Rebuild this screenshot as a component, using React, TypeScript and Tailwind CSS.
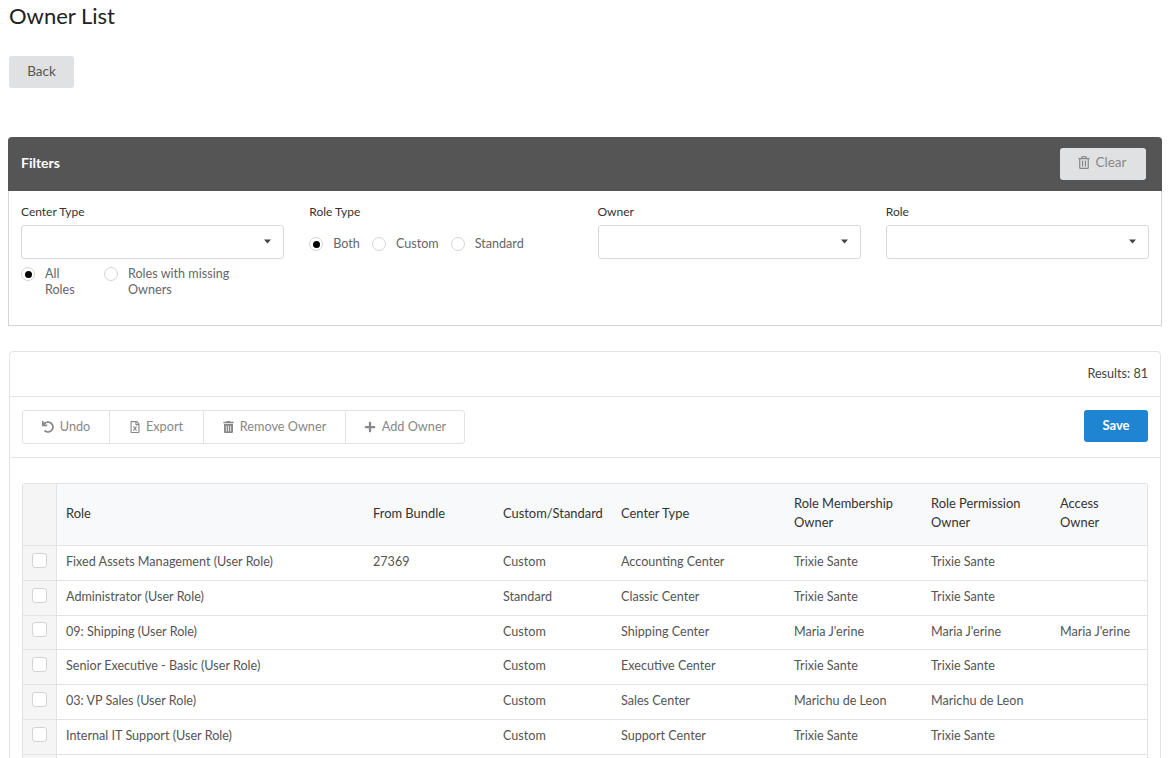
import React from "react";
import { FaPlus, FaRegFileExcel, FaRegTrashAlt, FaTrashAlt, FaUndo } from "react-icons/fa";

function Radio({ on, className = "" }: { on?: boolean; className?: string }) {
  return (
    <span className={"flex h-[14px] w-[14px] shrink-0 items-center justify-center rounded-full border border-[#d4d4d4] bg-white " + className}>
      {on && <span className="h-[7px] w-[7px] rounded-full bg-black" />}
    </span>
  );
}

function Select() {
  return (
    <div className="flex h-[34px] items-center justify-end rounded-[3px] border border-[#d9d9d9] bg-white pb-[2px] pr-[12px]">
      <svg width="7" height="5" viewBox="0 0 7 5"><path d="M0 0.5H7L3.5 4.5Z" fill="#444" /></svg>
    </div>
  );
}

function Label({ children }: { children: React.ReactNode }) {
  return <div className="mb-[5px] h-[16px] text-[12px] leading-[16px] text-[#333]">{children}</div>;
}

function ToolBtn({ icon, label, w, last }: { icon: React.ReactNode; label: string; w: string; last?: boolean }) {
  return (
    <div className={"flex h-full items-center justify-center gap-[6px] pb-[1px] text-[#888] " + w + (last ? "" : " border-r border-[#e3e3e3]")}>
      {icon}
      <span className="text-[12.7px]">{label}</span>
    </div>
  );
}

const rows = [
  ["Fixed Assets Management (User Role)", "27369", "Custom", "Accounting Center", "Trixie Sante", "Trixie Sante", ""],
  ["Administrator (User Role)", "", "Standard", "Classic Center", "Trixie Sante", "Trixie Sante", ""],
  ["09: Shipping (User Role)", "", "Custom", "Shipping Center", "Maria J'erine", "Maria J'erine", "Maria J'erine"],
  ["Senior Executive - Basic (User Role)", "", "Custom", "Executive Center", "Trixie Sante", "Trixie Sante", ""],
  ["03: VP Sales (User Role)", "", "Custom", "Sales Center", "Marichu de Leon", "Marichu de Leon", ""],
  ["Internal IT Support (User Role)", "", "Custom", "Support Center", "Trixie Sante", "Trixie Sante", ""],
  ["", "", "", "", "", "", ""],
];

const heads = ["Role", "From Bundle", "Custom/Standard", "Center Type", "Role Membership Owner", "Role Permission Owner", "Access Owner"];
const widths = ["w-[307px]", "w-[130px]", "w-[118px]", "w-[173px]", "w-[137px]", "w-[129px]", "w-[96px]"];

export default function App() {
  return (
    <div className="h-[758px] overflow-hidden bg-white font-['Lato','Open_Sans',sans-serif] text-[13px] text-[#555]">
      <h1 className="pl-[9px] pt-[2px] text-[22px] font-normal leading-[28px] text-[#222]">Owner List</h1>
      <div className="pl-[9px] pt-[26px]">
        <div className="flex h-[32px] w-[65px] items-center justify-center rounded-[3px] bg-[#dfe1e2] pb-[2px] text-[13.5px] text-[#555]">Back</div>
      </div>

      <section className="ml-[8px] mt-[49px] w-[1154px] rounded-t-[4px] border-b border-l border-r border-[#d4d4d4]">
        <div className="-mx-px flex h-[54px] items-center justify-between rounded-t-[4px] bg-[#555555] pl-[13px] pr-[16px]">
          <span className="mb-[3px] text-[14px] font-bold text-white">Filters</span>
          <div className="flex h-[32px] w-[86px] items-center justify-center gap-[6px] rounded-[3px] bg-[#dfe1e2] pb-[3px] pr-[2px] text-[13.5px] text-[#888]">
            <FaRegTrashAlt className="h-[13px] w-[12px]" />
            <span>Clear</span>
          </div>
        </div>
        <div className="grid h-[134px] grid-cols-4 content-start gap-x-[25px] pl-[12px] pr-[12px] pt-[13px]">
          <div>
            <Label>Center Type</Label>
            <Select />
            <div className="mt-[7px] flex text-[12.6px] leading-[16px] text-[#666]">
              <div className="flex w-[83px] items-start gap-[10px]">
                <Radio on className="mt-[1px]" />
                <span className="w-[30px]">All Roles</span>
              </div>
              <div className="flex items-start gap-[10px]">
                <Radio className="mt-[1px]" />
                <span className="w-[110px]">Roles with missing Owners</span>
              </div>
            </div>
          </div>
          <div>
            <Label>Role Type</Label>
            <div className="flex h-[38px] items-center text-[12.6px] text-[#666]">
              <Radio on />
              <span className="ml-[10px]">Both</span>
              <Radio className="ml-[12px]" />
              <span className="ml-[10px]">Custom</span>
              <Radio className="ml-[12px]" />
              <span className="ml-[10px]">Standard</span>
            </div>
          </div>
          <div>
            <Label>Owner</Label>
            <Select />
          </div>
          <div>
            <Label>Role</Label>
            <Select />
          </div>
        </div>
      </section>

      <section className="ml-[9px] mt-[25px] w-[1152px] rounded-t-[4px] border border-[#e3e3e3] pb-[60px]">
        <div className="flex h-[45px] items-center justify-end border-b border-[#e3e3e3] pr-[12px] text-[12.6px] text-[#444]">Results: 81</div>
        <div className="flex h-[61px] items-center justify-between border-b border-[#e3e3e3] pl-[12px] pr-[12px]">
          <div className="flex h-[34px] items-center rounded-[3px] border border-[#e3e3e3]">
            <ToolBtn w="w-[87px]" label="Undo" icon={<FaUndo className="h-[12px] w-[12px]" />} />
            <ToolBtn w="w-[94px]" label="Export" icon={<FaRegFileExcel className="h-[12px] w-[10px]" />} />
            <ToolBtn w="w-[142px]" label="Remove Owner" icon={<FaTrashAlt className="h-[12px] w-[11px]" />} />
            <ToolBtn w="w-[118px]" label="Add Owner" last icon={<FaPlus className="h-[12px] w-[12px]" />} />
          </div>
          <div className="mb-[2px] flex h-[32px] w-[64px] items-center justify-center rounded-[3px] bg-[#1f85d3] text-[13px] font-bold text-white">Save</div>
        </div>
        <div className="pl-[12px] pr-[12px] pt-[25px]">
          <table className="w-[1126px] table-fixed border-separate border-spacing-0 rounded-t-[3px] border-l border-r border-t border-[#e3e3e3]">
            <thead>
              <tr>
                <th className="h-[62px] w-[34px] border-b border-r border-[#e3e3e3] bg-[#f5f5f5]" />
                {heads.map((h, i) => (
                  <th key={h} className={"border-b border-[#e3e3e3] bg-[#f7f9fa] pb-[3px] pl-[9px] pr-[9px] text-left text-[12.9px] font-normal leading-[19px] text-[#333] " + widths[i]}>{h}</th>
                ))}
              </tr>
            </thead>
            <tbody>
              {rows.map((r, ri) => (
                <tr key={ri}>
                  <td className="h-[34.8px] border-b border-r border-[#e3e3e3] bg-[#f5f5f5] p-0">
                    <div className="mb-[5px] ml-[9px] h-[15px] w-[15px] rounded-[3px] border border-[#d4d4d4] bg-white" />
                  </td>
                  {r.map((c, ci) => (
                    <td key={ci} className="whitespace-nowrap border-b border-[#e3e3e3] pb-[1px] pl-[9px] pr-[9px] text-[12.6px] text-[#555]">{c}</td>
                  ))}
                </tr>
              ))}
            </tbody>
          </table>
        </div>
      </section>
    </div>
  );
}
